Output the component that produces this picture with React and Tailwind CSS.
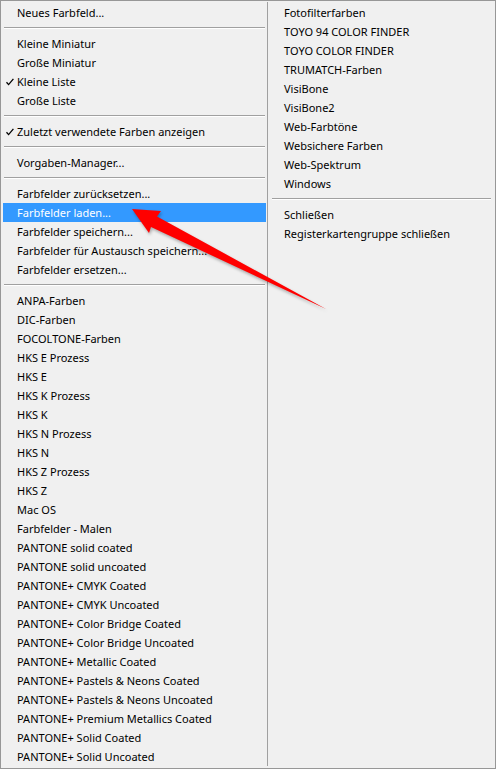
const LEFT_GROUPS = [
  [{ label: "Neues Farbfeld..." }],
  [
    { label: "Kleine Miniatur" },
    { label: "Große Miniatur" },
    { label: "Kleine Liste", checked: true },
    { label: "Große Liste" },
  ],
  [{ label: "Zuletzt verwendete Farben anzeigen", checked: true }],
  [{ label: "Vorgaben-Manager..." }],
  [
    { label: "Farbfelder zurücksetzen..." },
    { label: "Farbfelder laden...", active: true },
    { label: "Farbfelder speichern..." },
    { label: "Farbfelder für Austausch speichern..." },
    { label: "Farbfelder ersetzen..." },
  ],
  [
    "ANPA-Farben",
    "DIC-Farben",
    "FOCOLTONE-Farben",
    "HKS E Prozess",
    "HKS E",
    "HKS K Prozess",
    "HKS K",
    "HKS N Prozess",
    "HKS N",
    "HKS Z Prozess",
    "HKS Z",
    "Mac OS",
    "Farbfelder - Malen",
    "PANTONE solid coated",
    "PANTONE solid uncoated",
    "PANTONE+ CMYK Coated",
    "PANTONE+ CMYK Uncoated",
    "PANTONE+ Color Bridge Coated",
    "PANTONE+ Color Bridge Uncoated",
    "PANTONE+ Metallic Coated",
    "PANTONE+ Pastels & Neons Coated",
    "PANTONE+ Pastels & Neons Uncoated",
    "PANTONE+ Premium Metallics Coated",
    "PANTONE+ Solid Coated",
    "PANTONE+ Solid Uncoated",
  ].map((label) => ({ label })),
];

const RIGHT_GROUPS = [
  [
    "Fotofilterfarben",
    "TOYO 94 COLOR FINDER",
    "TOYO COLOR FINDER",
    "TRUMATCH-Farben",
    "VisiBone",
    "VisiBone2",
    "Web-Farbtöne",
    "Websichere Farben",
    "Web-Spektrum",
    "Windows",
  ].map((label) => ({ label })),
  [{ label: "Schließen" }, { label: "Registerkartengruppe schließen" }],
];

function Check() {
  return (
    <svg className="absolute left-[3px] top-[6px]" width="8" height="8" viewBox="0 0 8 8">
      <path d="M0.5 4.2 L2.6 6.6 L7.4 0.8" fill="none" stroke="#000" strokeWidth="1.3" />
    </svg>
  );
}

function Item({ item, pad }) {
  return (
    <div
      className={`relative h-[19px] leading-[19px] whitespace-nowrap ${pad} ${
        item.active ? "bg-[#3399ff] text-white" : "text-black"
      }`}
    >
      {item.checked && <Check />}
      {item.label}
    </div>
  );
}

function Separator() {
  return (
    <div className="h-[12px] flex flex-col justify-center mx-[1px]">
      <div className="h-px bg-[#a0a0a0]" />
      <div className="h-px bg-white" />
    </div>
  );
}

function Column({ groups, pad, className }) {
  return (
    <div className={className}>
      {groups.map((group, i) => (
        <div key={i}>
          {i > 0 && <Separator />}
          {group.map((item) => (
            <Item key={item.label} item={item} pad={pad} />
          ))}
        </div>
      ))}
    </div>
  );
}

function Arrow() {
  return (
    <svg
      className="absolute left-0 top-0 pointer-events-none"
      width="496"
      height="769"
      style={{ filter: "drop-shadow(1px 2px 1.5px rgba(0,0,0,0.3))" }}
    >
      <polygon
        points="131,208 160,210 156,215.5 325,308 150,226 148,232"
        fill="#ff0000"
      />
    </svg>
  );
}

export default function App() {
  return (
    <div
      className="relative w-[496px] h-[769px] border border-[#979797] bg-[#f0f0f0] flex overflow-hidden text-[11px]"
      style={{ fontFamily: "'Noto Sans', 'Open Sans', sans-serif" }}
    >
      <Column groups={LEFT_GROUPS} pad="pl-[14px]" className="w-[266px] pt-[2px] pl-[2px] pr-[1px]" />
      <div className="w-px bg-[#a0a0a0] mt-[1px] mb-[2px]" />
      <Column groups={RIGHT_GROUPS} pad="pl-[13px]" className="flex-1 pt-[2px] px-[3px]" />
      <Arrow />
    </div>
  );
}
